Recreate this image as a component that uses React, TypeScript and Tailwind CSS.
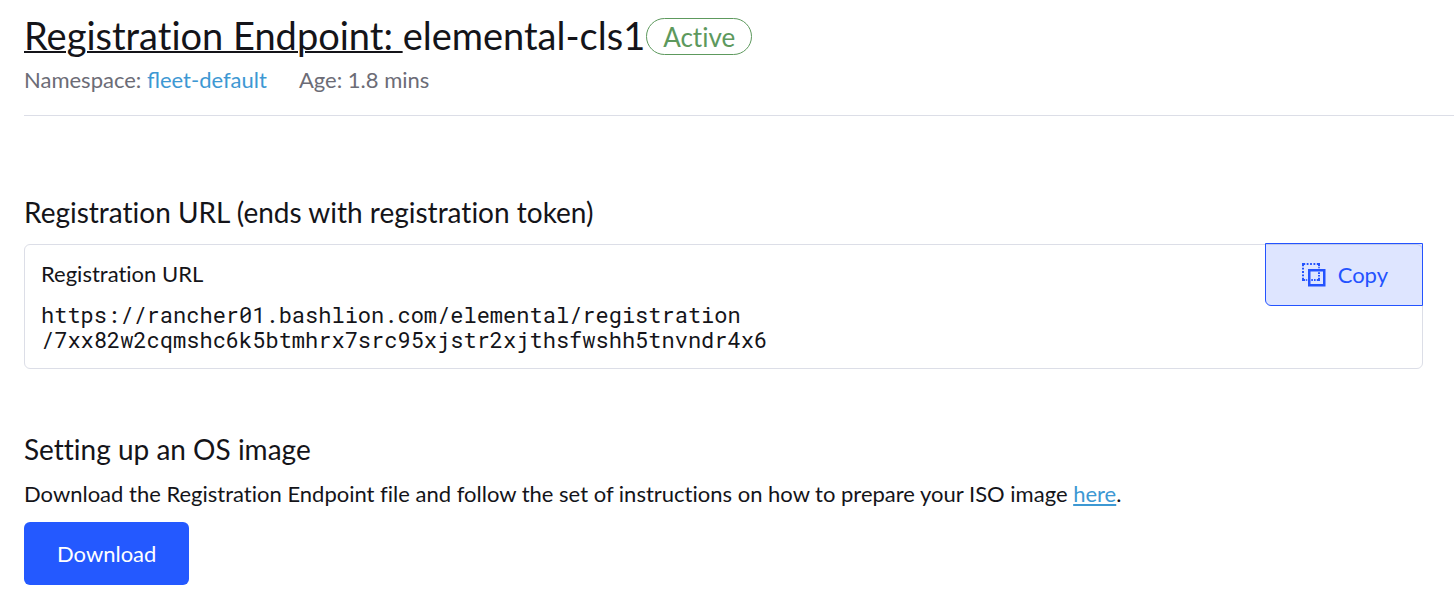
function CopyIcon() {
  return (
    <svg width="24" height="24" viewBox="0 0 24 24" fill="none" stroke="currentColor" strokeWidth="2" aria-hidden="true">
      <path d="M3.2 1H1V3.2M14.8 1H17V3.2M3.2 17H1V14.8M14.8 17H17V14.8" />
      <path d="M4.7 1h1.8M8.1 1h1.8M11.5 1h1.8M1 4.7v1.8M1 8.1v1.8M1 11.5v1.8M4.2 17h1M9.3 17h1.6M12 17h1.6M17 4.2v1M17 9.3v1.6M17 12v1.6" />
      <rect x="7.25" y="7.25" width="15" height="15" strokeWidth="2.5" />
    </svg>
  );
}

export default function App() {
  return (
    <main className="pt-[11px] pb-6 pl-6 font-['Lato',sans-serif] text-[22px] leading-[26px] text-[#141419] [font-variant-ligatures:none]">
      <header className="border-b border-[#dcdee7] pb-[22px]">
        <h1 className="flex items-center text-[38px] leading-[48px]">
          <a href="#endpoints" className="whitespace-pre underline decoration-2">Registration Endpoint: </a>
          <span>elemental-cls1</span>
          <span className="mt-[3px] ml-px rounded-full border border-[#5d995d] px-4 pt-1 pb-[3px] text-[26px] leading-[28px] text-[#5d995d]">Active</span>
        </h1>
        <div className="mt-2 flex gap-8 text-[#6c6c76]">
          <span>Namespace: <a href="#namespace" className="text-[#3d98d3] [font-variant-ligatures:normal]">fleet-default</a></span>
          <span>Age: 1.8 mins</span>
        </div>
      </header>
      <section className="mt-[79px] pr-[31px]">
        <h2 className="text-[28px] leading-[34px]">Registration URL (ends with registration token)</h2>
        <div className="relative mt-[15px] rounded-md border border-[#dcdee7] p-4">
          <h3>Registration URL</h3>
          <p className="mt-[15px] font-['Roboto_Mono','DejaVu_Sans_Mono',monospace] leading-[25px]">https://rancher01.bashlion.com/elemental/registration<br />/7xx82w2cqmshc6k5btmhrx7src95xjstr2xjthsfwshh5tnvndr4x6</p>
          <button type="button" className="absolute -top-[2px] -right-px flex h-[63px] items-center gap-3 rounded-bl-md border border-[#2453ff] bg-[#2453ff]/15 pr-[34px] pl-9 text-[#2453ff]">
            <CopyIcon />
            Copy
          </button>
        </div>
      </section>
      <section className="mt-[63px] pr-[31px]">
        <h2 className="text-[28px] leading-[34px]">Setting up an OS image</h2>
        <p className="mt-[15px]">Download the Registration Endpoint file and follow the set of instructions on how to prepare your ISO image <a href="#docs" className="text-[#3d98d3] underline">here</a>.</p>
        <button type="button" className="mt-[15px] rounded-md bg-[#2459ff] px-[33px] py-[18px] leading-[27px] text-white">Download</button>
      </section>
    </main>
  );
}
